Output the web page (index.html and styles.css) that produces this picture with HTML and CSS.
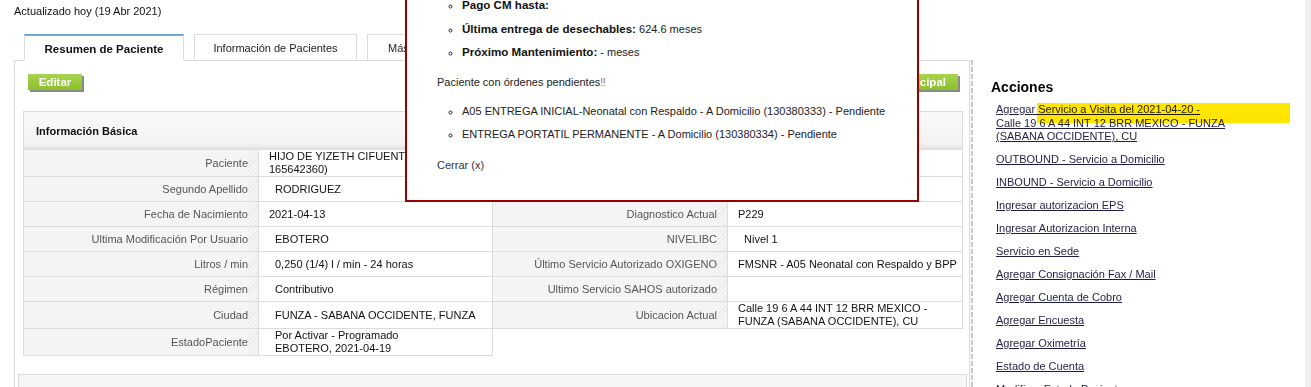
FILE: index.html
```html
<!DOCTYPE html>
<html lang="es">
<head>
<meta charset="utf-8">
<title>Resumen de Paciente</title>
<link rel="stylesheet" href="styles.css">
</head>
<body>
<div class="page">
  <div class="main">
    <div class="updated">Actualizado hoy (19 Abr 2021)</div>
    <div class="tabs">
      <div class="tab tab-active">Resumen de Paciente</div>
      <div class="tab tab-info">Información de Pacientes</div>
      <div class="tab tab-more">Más Información</div>
    </div>
    <div class="panel">
      <div class="toolbar">
        <span class="btn">Editar</span>
        <span class="btn">Volver a Principal</span>
      </div>
      <div class="info">
        <div class="info-head">Información Básica</div>
        <div class="info-grid">
          <div class="lbl">Paciente</div>
          <div class="val">HIJO DE YIZETH CIFUENTES (RC<br>165642360)</div>
          <div class="lbl">Documento</div>
          <div class="val">RC 165642360</div>

          <div class="lbl">Segundo Apellido</div>
          <div class="val val-indent">RODRIGUEZ</div>
          <div class="lbl">EPS</div>
          <div class="val">SANITAS</div>

          <div class="lbl">Fecha de Nacimiento</div>
          <div class="val">2021-04-13</div>
          <div class="lbl">Diagnostico Actual</div>
          <div class="val">P229</div>

          <div class="lbl">Ultima Modificación Por Usuario</div>
          <div class="val val-indent">EBOTERO</div>
          <div class="lbl">NIVELIBC</div>
          <div class="val val-indent">Nivel 1</div>

          <div class="lbl">Litros / min</div>
          <div class="val val-indent">0,250 (1/4) l / min - 24 horas</div>
          <div class="lbl">Último Servicio Autorizado OXIGENO</div>
          <div class="val">FMSNR - A05 Neonatal con Respaldo y BPP</div>

          <div class="lbl">Régimen</div>
          <div class="val val-indent">Contributivo</div>
          <div class="lbl">Ultimo Servicio SAHOS autorizado</div>
          <div class="val"></div>

          <div class="lbl">Ciudad</div>
          <div class="val val-indent">FUNZA - SABANA OCCIDENTE, FUNZA</div>
          <div class="lbl">Ubicacion Actual</div>
          <div class="val">Calle 19 6 A 44 INT 12 BRR MEXICO -<br>FUNZA (SABANA OCCIDENTE), CU</div>

          <div class="lbl">EstadoPaciente</div>
          <div class="val val-indent">Por Activar - Programado<br>EBOTERO, 2021-04-19</div>
        </div>
      </div>
      <div class="subbox"></div>
    </div>
  </div>

  <aside class="actions">
    <h2 class="actions-title">Acciones</h2>
    <div class="actions-list">
      <a class="action" href="#">Agregar Servicio a Visita del 2021-04-20 - Calle 19 6 A 44 INT 12 BRR MEXICO - FUNZA (SABANA OCCIDENTE), CU</a>
      <a class="action" href="#">OUTBOUND - Servicio a Domicilio</a>
      <a class="action" href="#">INBOUND - Servicio a Domicilio</a>
      <a class="action" href="#">Ingresar autorizacion EPS</a>
      <a class="action" href="#">Ingresar Autorizacion Interna</a>
      <a class="action" href="#">Servicio en Sede</a>
      <a class="action" href="#">Agregar Consignación Fax / Mail</a>
      <a class="action" href="#">Agregar Cuenta de Cobro</a>
      <a class="action" href="#">Agregar Encuesta</a>
      <a class="action" href="#">Agregar Oximetría</a>
      <a class="action" href="#">Estado de Cuenta</a>
      <a class="action" href="#">Modificar Estado Paciente</a>
    </div>
    <div class="highlight"></div>
  </aside>

  <div class="gutter"></div>
</div>

<div class="modal">
  <ul class="modal-list">
    <li><b>Pago CM hasta:</b></li>
    <li><b>Última entrega de desechables:</b> 624.6 meses</li>
    <li><b>Próximo Mantenimiento:</b> - meses</li>
  </ul>
  <p class="modal-text">Paciente con órdenes pendientes<span class="bang">‼</span></p>
  <ul class="modal-list modal-orders">
    <li>A05 ENTREGA INICIAL-Neonatal con Respaldo - A Domicilio (130380333) - Pendiente</li>
    <li>ENTREGA PORTATIL PERMANENTE - A Domicilio (130380334) - Pendiente</li>
  </ul>
  <p class="modal-close">Cerrar (x)</p>
</div>
</body>
</html>
```

FILE: styles.css
```css
html, body {
  margin: 0;
  padding: 0;
  height: 387px;
  overflow: hidden;
  background: #fff;
}

body {
  font-family: "Liberation Sans", Arial, sans-serif;
  font-size: 11px;
  color: #111;
  position: relative;
}

.page {
  display: flex;
  align-items: flex-start;
  height: 387px;
}

.main {
  width: 971px;
  flex: none;
  padding-left: 14px;
  box-sizing: border-box;
}

.updated {
  padding-top: 4px;
  line-height: 14px;
  color: #111;
}

.tabs {
  display: flex;
  gap: 10px;
  margin: 16px 0 -1px 10px;
  position: relative;
  z-index: 1;
}

.tab {
  box-sizing: border-box;
  height: 27px;
  border: 1px solid #dcdcdc;
  background: #fff;
  display: flex;
  align-items: center;
  justify-content: center;
  color: #222;
}

.tab-active {
  width: 160px;
  border-top: 2px solid #6fa8dc;
  border-bottom-color: #fff;
  font-weight: bold;
  font-size: 11.5px;
  padding-top: 1px;
  color: #111;
}

.tab-info {
  width: 163px;
}

.tab-more {
  width: 160px;
  justify-content: flex-start;
  padding-left: 20px;
}

.panel {
  width: 956px;
  box-sizing: border-box;
  border: 1px solid #dcdcdc;
  padding: 13px 6px 0 8px;
  height: 420px;
}

.toolbar {
  display: flex;
  justify-content: space-between;
  padding: 0 5px;
  height: 19px;
}

.btn {
  display: inline-flex;
  align-items: center;
  justify-content: center;
  height: 16px;
  padding: 0 12px;
  background: linear-gradient(#a8d44f, #8cbf2c);
  color: #fff;
  font-weight: bold;
  font-size: 11.5px;
  box-shadow: 2px 2px 0 #8a8a8a;
}

.toolbar .btn:first-child {
  width: 54px;
  padding: 0;
}

.info {
  margin-top: 18px;
}

.info-head {
  box-sizing: border-box;
  height: 39px;
  border: 1px solid #dcdcdc;
  background: linear-gradient(#fafafa, #f3f3f3 85%, #e3e3e3);
  display: flex;
  align-items: center;
  padding-left: 12px;
  font-weight: bold;
  color: #111;
}

.info-grid {
  display: grid;
  grid-template-columns: 235px 234px 235px 235px;
  border-left: 1px solid #dcdcdc;
  width: 940px;
  box-sizing: border-box;
}

.lbl, .val {
  min-height: 24px;
  border-right: 1px solid #dcdcdc;
  border-bottom: 1px solid #dcdcdc;
  display: flex;
  align-items: center;
  line-height: 13px;
}

.lbl {
  justify-content: flex-end;
  text-align: right;
  padding-right: 10px;
  color: #555;
  background:
    repeating-linear-gradient(135deg, #e9e9e9 0 1px, #f6f6f6 1px 3px) right top / 10px 100% no-repeat,
    #f4f4f4;
}

.val {
  padding-left: 10px;
  color: #111;
  background: #fff;
}

.val-indent {
  padding-left: 16px;
}

.subbox {
  margin: 18px -4px 0 -5px;
  height: 60px;
  border: 1px solid #dcdcdc;
  background: #f6f6f6;
}

.actions {
  flex: 1;
  margin-top: 60px;
  height: 327px;
  padding: 19px 0 0 20px;
  position: relative;
  background: repeating-linear-gradient(to bottom, #c8c8c8 0 5px, transparent 5px 7px) left top / 2px 100% no-repeat;
}

.actions-title {
  margin: 0;
  font-size: 14px;
  line-height: 16px;
  font-weight: bold;
  color: #000;
}

.actions-list {
  margin-top: 8px;
  padding-left: 5px;
  width: 230px;
  display: flex;
  flex-direction: column;
  position: relative;
  z-index: 1;
}

.action {
  display: block;
  color: #1f1f45;
  text-decoration: underline;
  line-height: 13.5px;
  margin-bottom: 9.5px;
}

.highlight {
  position: absolute;
  left: 66px;
  top: 43px;
  width: 253px;
  height: 20px;
  background: #ffe500;
  mix-blend-mode: multiply;
  z-index: 2;
}

.gutter {
  width: 6px;
  flex: none;
  height: 387px;
  background: #efefef;
}

.modal {
  position: absolute;
  left: 405px;
  top: -12px;
  width: 514px;
  height: 214px;
  box-sizing: border-box;
  border: 2px solid #990000;
  background: #fff;
  padding: 8px 30px 0 30px;
  color: #222;
  z-index: 5;
}

.modal-list {
  list-style: circle;
  margin: 0;
  padding-left: 25px;
}

.modal-list li {
  height: 13px;
  line-height: 13px;
  margin-bottom: 10.5px;
}

.modal-list b {
  color: #111;
  font-size: 11.6px;
}

.modal-text {
  margin: 17.5px 0 0;
  line-height: 13px;
}

.bang {
  color: #b8741a;
}

.modal-orders {
  margin-top: 16px;
}

.modal-close {
  margin: 17.5px 0 0;
  line-height: 13px;
  color: #333;
}
```
